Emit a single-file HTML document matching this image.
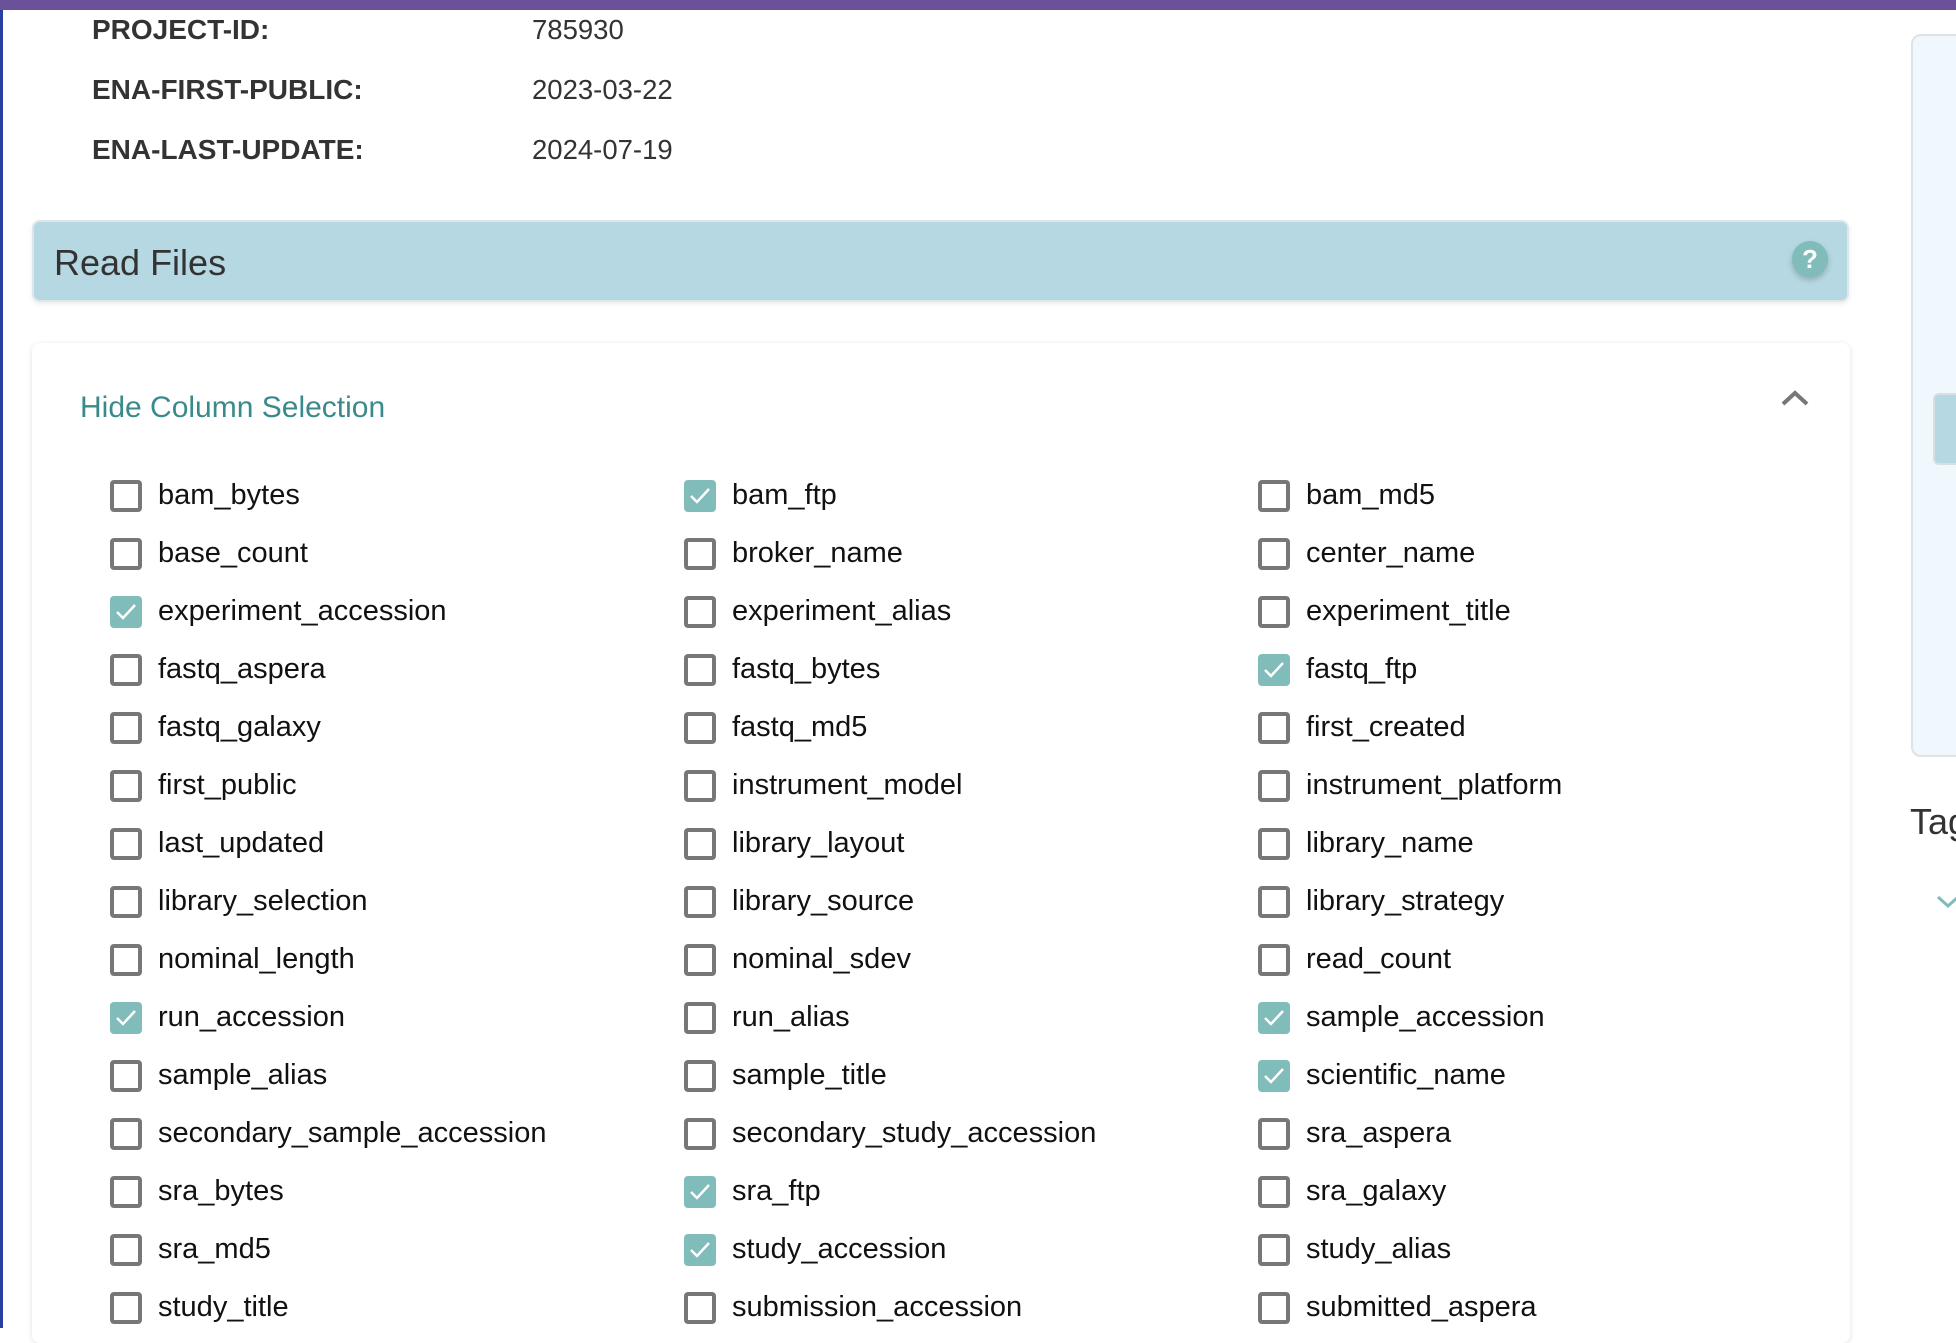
<!DOCTYPE html>
<html><head><meta charset="utf-8"><style>
*{margin:0;padding:0;box-sizing:border-box}
body{width:1956px;height:1328px;overflow:hidden;background:#fff;font-family:"Liberation Sans",Helvetica,Arial,sans-serif;position:relative}
.abs{position:absolute}
.lbl{position:absolute;left:92px;font-weight:bold;font-size:28px;color:#333;line-height:30px}
.val{position:absolute;left:532px;font-size:27.5px;color:#333;line-height:30px}
.cb{position:absolute;width:32px;height:32px;border:4px solid #777;border-radius:4px;background:#fff}
.cb.on{border:none;background:#80bcba}
.cb.on svg{position:absolute;left:5px;top:6px}
.t{position:absolute;font-size:29px;color:#111;line-height:32px;white-space:nowrap}
</style></head><body>
<div class="abs" style="left:0;top:0;width:1956px;height:10px;background:#6b5199"></div>
<div class="abs" style="left:0;top:10px;width:3px;height:1318px;background:#2c3f9e"></div>
<div class="lbl" style="top:15px">PROJECT-ID:</div><div class="val" style="top:15px">785930</div>
<div class="lbl" style="top:75px">ENA-FIRST-PUBLIC:</div><div class="val" style="top:75px">2023-03-22</div>
<div class="lbl" style="top:135px">ENA-LAST-UPDATE:</div><div class="val" style="top:135px">2024-07-19</div>

<div class="abs" style="left:32px;top:220px;width:1817px;height:82px;background:#b5d8e2;border:2px solid #dde7ea;border-radius:8px;box-shadow:0 2px 6px rgba(0,0,0,0.08)"></div>
<div class="abs" style="left:54px;top:243px;font-size:36px;color:#333;line-height:40px">Read Files</div>
<div class="abs" style="left:1792px;top:241px;width:36px;height:36px;border-radius:50%;background:#80bcba;box-shadow:0 3px 6px rgba(0,0,0,0.2);color:#fff;font-weight:bold;font-size:26px;line-height:36px;text-align:center">?</div>

<div class="abs" style="left:32px;top:343px;width:1818px;height:1000px;background:#fff;border-radius:8px;box-shadow:0 1px 6px rgba(0,0,0,0.12)"></div>
<div class="abs" style="left:80px;top:391px;font-size:30px;color:#3a8a8c;line-height:34px">Hide Column Selection</div>
<svg class="abs" style="left:1780px;top:388px" width="30" height="20"><path d="M3 16 L15 5 L27 16" fill="none" stroke="#777" stroke-width="4"/></svg>

<div class="abs" style="left:1911px;top:34px;width:60px;height:723px;background:#f0f7fd;border:2px solid #dde3e8;border-radius:10px"></div>
<div class="abs" style="left:1933px;top:393px;width:40px;height:72px;background:#b5d8e2;border:2px solid #d7dfe3;border-radius:6px"></div>
<div class="abs" style="left:1910px;top:802px;font-size:36px;color:#333;line-height:40px">Tag</div>
<svg class="abs" style="left:1936px;top:894px" width="24" height="16"><path d="M2 3 L12 12 L22 3" fill="none" stroke="#80bcba" stroke-width="3"/></svg>

<div id="g"></div>
<script>
var cols=[
["bam_bytes","base_count","*experiment_accession","fastq_aspera","fastq_galaxy","first_public","last_updated","library_selection","nominal_length","*run_accession","sample_alias","secondary_sample_accession","sra_bytes","sra_md5","study_title"],
["*bam_ftp","broker_name","experiment_alias","fastq_bytes","fastq_md5","instrument_model","library_layout","library_source","nominal_sdev","run_alias","sample_title","secondary_study_accession","*sra_ftp","*study_accession","submission_accession"],
["bam_md5","center_name","experiment_title","*fastq_ftp","first_created","instrument_platform","library_name","library_strategy","read_count","*sample_accession","*scientific_name","sra_aspera","sra_galaxy","study_alias","submitted_aspera"]];
var bx=[110,684,1258],h="";
for(var c=0;c<3;c++)for(var r=0;r<15;r++){var s=cols[c][r],on=s[0]=="*";if(on)s=s.slice(1);var cy=496+r*58;
h+='<div class="cb'+(on?' on':'')+'" style="left:'+bx[c]+'px;top:'+(cy-16)+'px">'+(on?'<svg width="22" height="20"><path d="M2 10 L8 16 L20 3" fill="none" stroke="#fff" stroke-width="2.5"/></svg>':'')+'</div>';
h+='<div class="t" style="left:'+(bx[c]+48)+'px;top:'+(cy-17)+'px">'+s+'</div>';}
document.getElementById('g').innerHTML=h;
</script>
</body></html>
